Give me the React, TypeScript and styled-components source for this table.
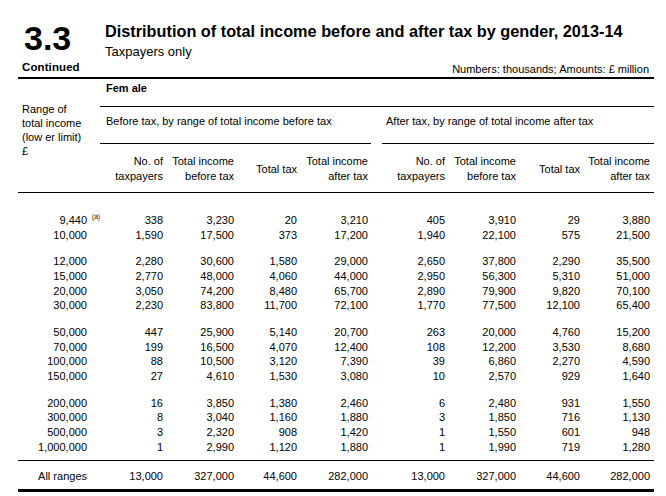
import React from "react";
import styled, { createGlobalStyle } from "styled-components";

const Global = createGlobalStyle`
  html, body { margin: 0; padding: 0; background: #ffffff; }
  body { font-family: "Liberation Sans", Arial, sans-serif; color: #000; }
`;

const Page = styled.div`
  width: 636px;
  margin-left: 18px;
  font-family: "Liberation Sans", Arial, sans-serif;
  color: #000;
`;

const TopBlock = styled.div`
  display: flex;
  height: 77px;
  box-sizing: border-box;
`;

const LeftHead = styled.div`
  width: 87px;
  padding-top: 21px;
  padding-left: 4px;
  box-sizing: border-box;
  display: flex;
  flex-direction: column;
`;

const BigNum = styled.div`
  font-size: 34px;
  line-height: 34px;
  font-weight: 700;
  padding-left: 2px;
`;

const Continued = styled.div`
  font-size: 11.5px;
  line-height: 13px;
  font-weight: 700;
  margin-top: 6px;
  letter-spacing: 0.1px;
`;

const RightHead = styled.div`
  flex: 1;
  padding-top: 22px;
  padding-right: 5px;
  display: flex;
  flex-direction: column;
`;

const Title = styled.div`
  font-size: 16.3px;
  line-height: 19px;
  font-weight: 700;
`;

const Subtitle = styled.div`
  font-size: 13px;
  line-height: 15px;
  margin-top: 3px;
`;

const Units = styled.div`
  font-size: 11px;
  line-height: 13px;
  margin-top: 3.5px;
  text-align: right;
`;

const HeadGrid = styled.div`
  display: grid;
  grid-template-columns: 82px 63px 71px 63px 71px 3px 11px 63px 71px 64px 70px 4px;
  border-top: 2px solid #000;
  border-bottom: 1px solid #000;
  font-size: 11px;
`;

const RangeLabel = styled.div`
  grid-column: 1;
  grid-row: 1 / span 3;
  padding-top: 23px;
  padding-left: 4px;
  line-height: 14px;
`;

const Female = styled.div`
  grid-column: 2 / -1;
  grid-row: 1;
  padding: 3px 0 11px 6px;
  line-height: 13px;
  font-weight: 700;
  border-bottom: 1px solid #000;
`;

const Section = styled.div<{ $from: number; $to: number; $pad: number }>`
  grid-column: ${(p) => p.$from} / ${(p) => p.$to};
  grid-row: 2;
  padding: 8px 0 15px ${(p) => p.$pad}px;
  line-height: 13px;
  border-bottom: 1px solid #000;
`;

const ColHead = styled.div<{ $from: number; $to: number }>`
  grid-column: ${(p) => p.$from} / ${(p) => p.$to};
  grid-row: 3;
  text-align: right;
  line-height: 15px;
  align-self: center;
  padding: 10px 0 8px;
`;

const Body = styled.div`
  padding: 20px 0 6px;
`;

const Group = styled.div`
  & + & {
    margin-top: 12px;
  }
`;

const Row = styled.div`
  display: grid;
  grid-template-columns: 69px 76px 71px 63px 71px 77px 71px 64px 70px;
  font-size: 11px;
  line-height: 14.65px;
`;

const Cell = styled.div`
  text-align: right;
`;

const RangeText = styled.span`
  position: relative;
`;

const Note = styled.span`
  position: absolute;
  left: 100%;
  top: -1px;
  margin-left: 5px;
  font-size: 6.5px;
  line-height: 8px;
  white-space: nowrap;
`;

const TotalRow = styled(Row)`
  border-top: 1px solid #000;
  border-bottom: 3px solid #000;
  padding: 7.5px 0 6px;
`;

type R = [string, ...string[]];

const groups: R[][] = [
  [
    ["9,440", "338", "3,230", "20", "3,210", "405", "3,910", "29", "3,880"],
    ["10,000", "1,590", "17,500", "373", "17,200", "1,940", "22,100", "575", "21,500"],
  ],
  [
    ["12,000", "2,280", "30,600", "1,580", "29,000", "2,650", "37,800", "2,290", "35,500"],
    ["15,000", "2,770", "48,000", "4,060", "44,000", "2,950", "56,300", "5,310", "51,000"],
    ["20,000", "3,050", "74,200", "8,480", "65,700", "2,890", "79,900", "9,820", "70,100"],
    ["30,000", "2,230", "83,800", "11,700", "72,100", "1,770", "77,500", "12,100", "65,400"],
  ],
  [
    ["50,000", "447", "25,900", "5,140", "20,700", "263", "20,000", "4,760", "15,200"],
    ["70,000", "199", "16,500", "4,070", "12,400", "108", "12,200", "3,530", "8,680"],
    ["100,000", "88", "10,500", "3,120", "7,390", "39", "6,860", "2,270", "4,590"],
    ["150,000", "27", "4,610", "1,530", "3,080", "10", "2,570", "929", "1,640"],
  ],
  [
    ["200,000", "16", "3,850", "1,380", "2,460", "6", "2,480", "931", "1,550"],
    ["300,000", "8", "3,040", "1,160", "1,880", "3", "1,850", "716", "1,130"],
    ["500,000", "3", "2,320", "908", "1,420", "1", "1,550", "601", "948"],
    ["1,000,000", "1", "2,990", "1,120", "1,880", "1", "1,990", "719", "1,280"],
  ],
];

const total: R = ["All ranges", "13,000", "327,000", "44,600", "282,000", "13,000", "327,000", "44,600", "282,000"];

const heads: { from: number; to: number; lines: string[] }[] = [
  { from: 2, to: 3, lines: ["No. of", "taxpayers"] },
  { from: 3, to: 4, lines: ["Total income", "before tax"] },
  { from: 4, to: 5, lines: ["Total tax"] },
  { from: 5, to: 6, lines: ["Total income", "after tax"] },
  { from: 6, to: 9, lines: ["No. of", "taxpayers"] },
  { from: 9, to: 10, lines: ["Total income", "before tax"] },
  { from: 10, to: 11, lines: ["Total tax"] },
  { from: 11, to: 12, lines: ["Total income", "after tax"] },
];

export default function App() {
  return (
    <Page>
      <Global />
      <TopBlock>
        <LeftHead>
          <BigNum>3.3</BigNum>
          <Continued>Continued</Continued>
        </LeftHead>
        <RightHead>
          <Title>Distribution of total income before and after tax by gender, 2013-14</Title>
          <Subtitle>Taxpayers only</Subtitle>
          <Units>Numbers: thousands; Amounts: £ million</Units>
        </RightHead>
      </TopBlock>
      <HeadGrid>
        <RangeLabel>
          Range of
          <br />
          total income
          <br />
          (low er limit)
          <br />£
        </RangeLabel>
        <Female>Fem ale</Female>
        <Section $from={2} $to={7} $pad={6}>
          Before tax, by range of total income before tax
        </Section>
        <Section $from={8} $to={-1} $pad={4}>
          After tax, by range of total income after tax
        </Section>
        {heads.map((h, i) => (
          <ColHead key={i} $from={h.from} $to={h.to}>
            {h.lines.map((l, j) => (
              <React.Fragment key={j}>
                {j > 0 && <br />}
                {l}
              </React.Fragment>
            ))}
          </ColHead>
        ))}
      </HeadGrid>
      <Body>
        {groups.map((g, gi) => (
          <Group key={gi}>
            {g.map((r, ri) => (
              <Row key={ri}>
                {r.map((c, ci) => (
                  <Cell key={ci}>
                    {ci === 0 && gi === 0 && ri === 0 ? (
                      <RangeText>
                        {c}
                        <Note>(a)</Note>
                      </RangeText>
                    ) : (
                      c
                    )}
                  </Cell>
                ))}
              </Row>
            ))}
          </Group>
        ))}
      </Body>
      <TotalRow>
        {total.map((c, i) => (
          <Cell key={i}>{c}</Cell>
        ))}
      </TotalRow>
    </Page>
  );
}
